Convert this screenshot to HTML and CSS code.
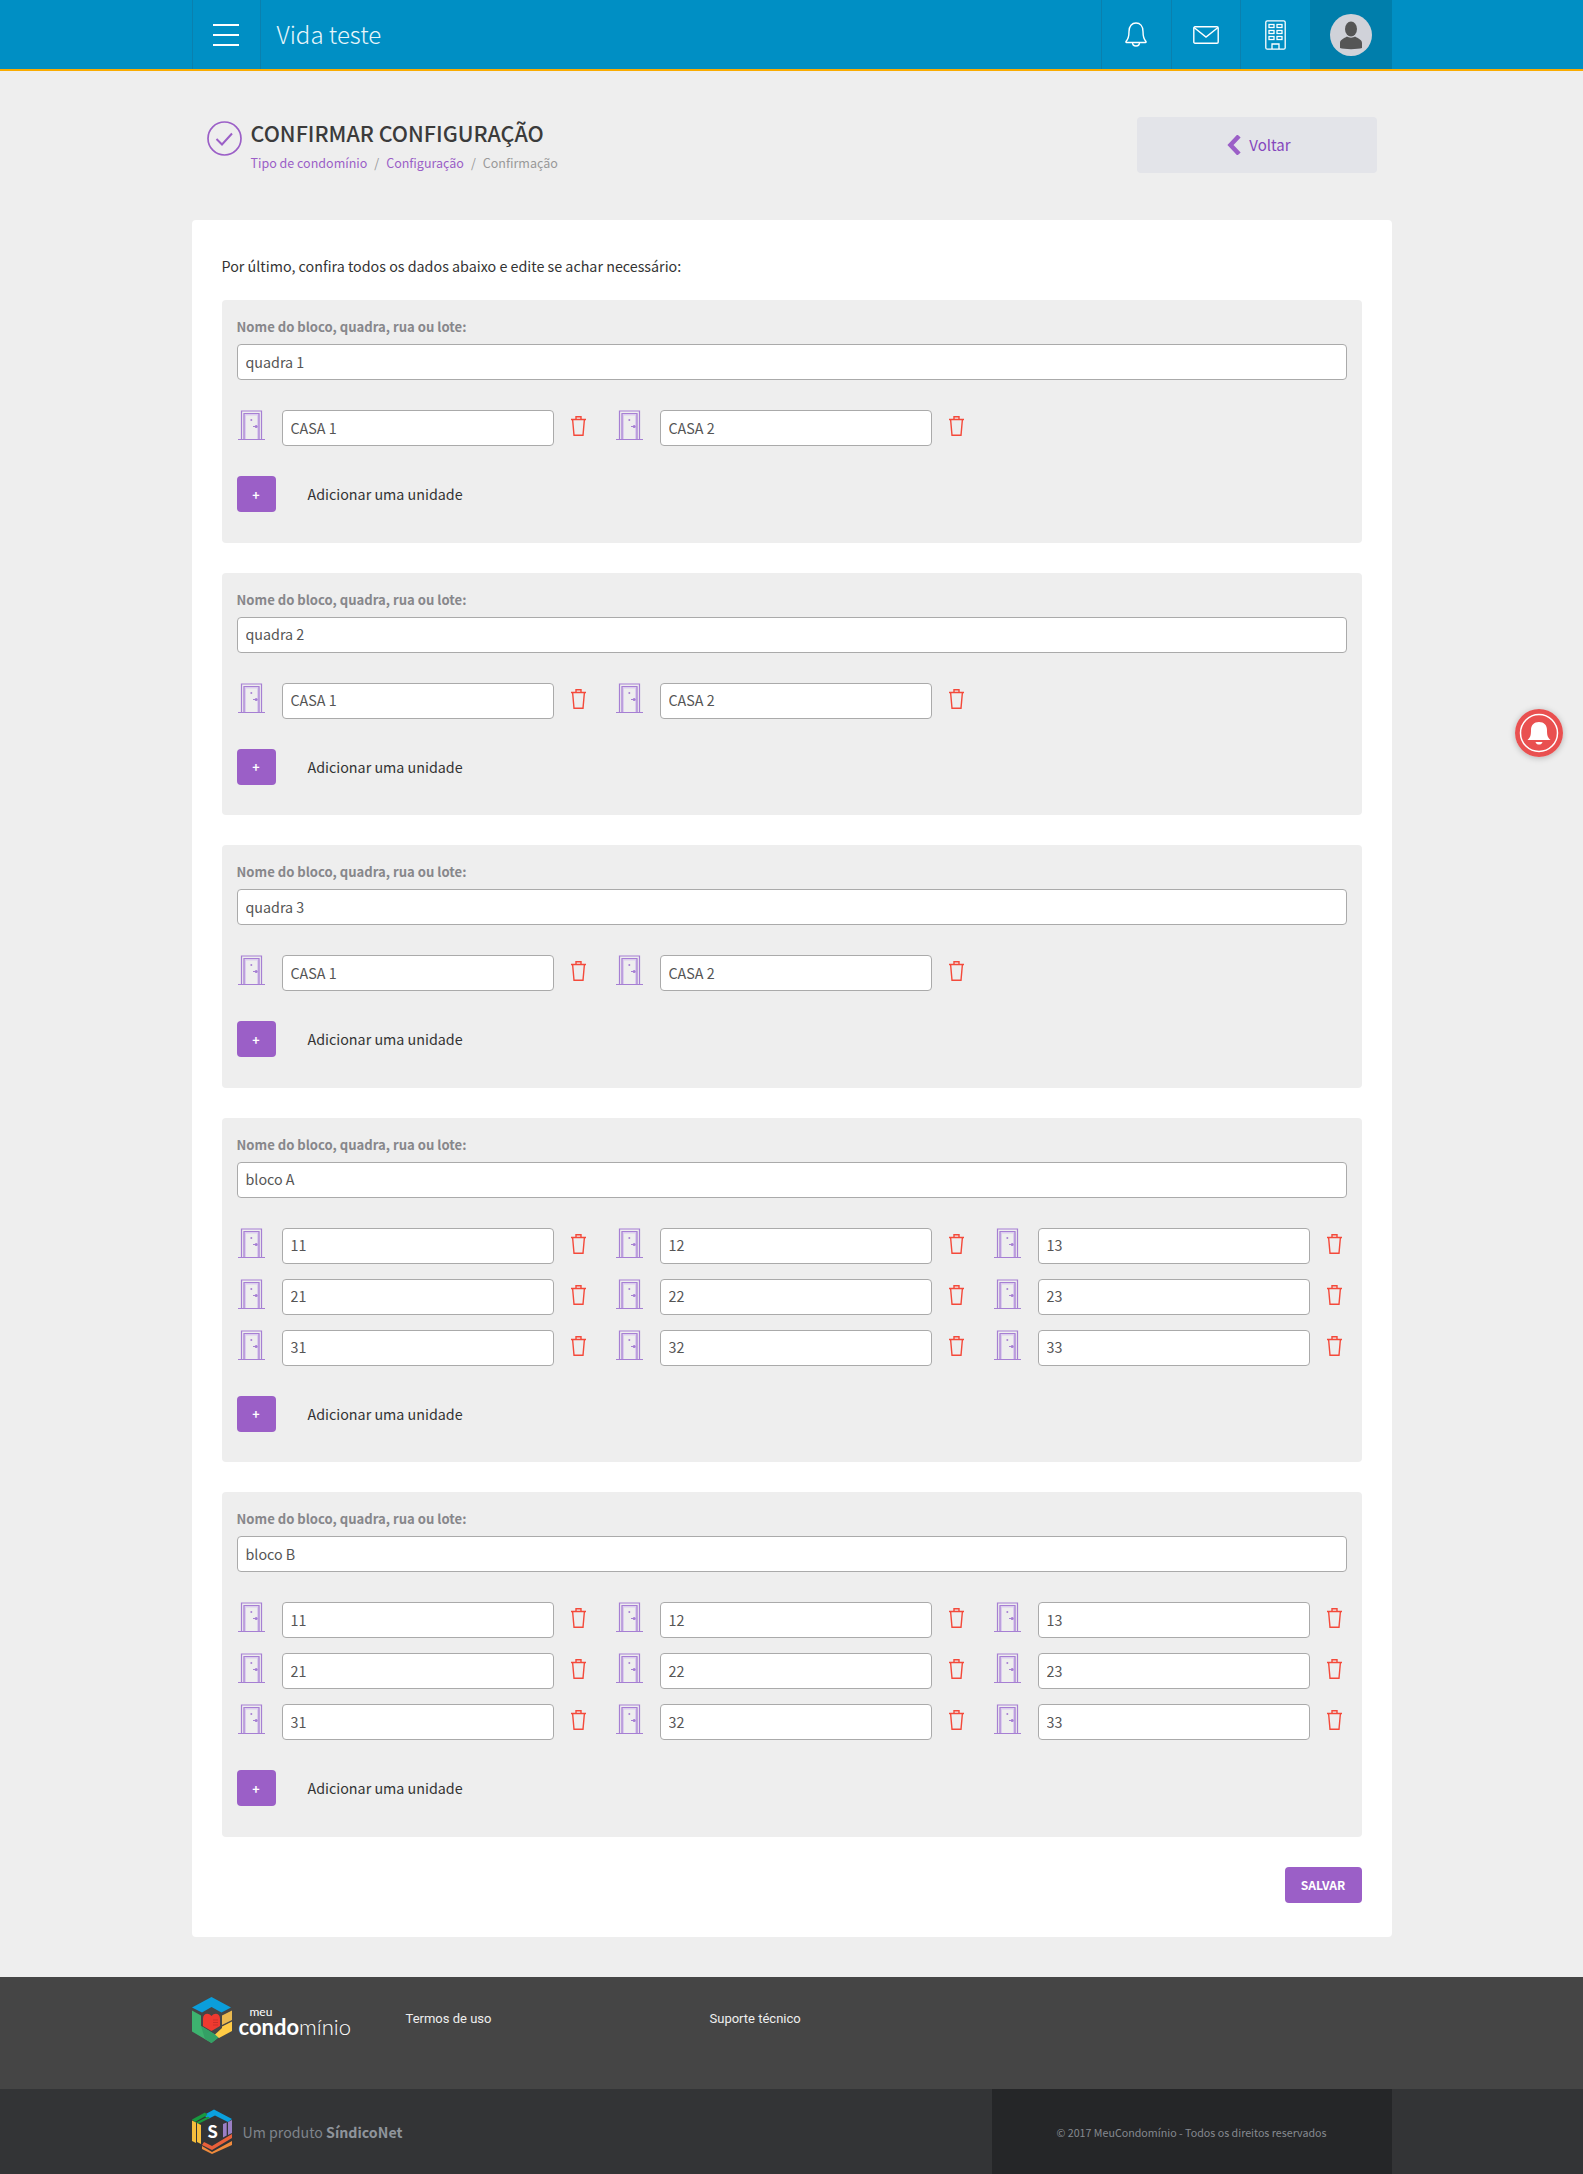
FILE: index.html
```html
<!DOCTYPE html>
<html lang="pt-BR">
<head>
    <meta charset="UTF-8">
    <meta name="viewport" content="width=device-width, initial-scale=1.0">
    <title>Confirmar configuração</title>
    <link rel="stylesheet" href="styles.css">
</head>
<body>
    <svg class="defs" width="0" height="0">
        <symbol id="door" viewBox="0 0 27 30">
            <path d="M5.500 29V3.500H21.500V29Z" fill="#dccdee"/>
            <path d="M8 29V5.500H19V29Z" fill="#eee"/>
            <path d="M0 29.500H27M3.500 29V1H23.500V29M6 29V3.500H21V29" fill="none" stroke="#a67fd3" stroke-width="1.200"/>
            <circle cx="13.300" cy="10" r="1" fill="#a67fd3"/>
            <circle cx="18.200" cy="16.500" r="1.500" fill="#a67fd3"/>
            <path d="M15 16.500H18" stroke="#a67fd3"/>
        </symbol>
        <symbol id="trash" viewBox="0 0 15 20">
            <path d="M0 3.500H15M5 3.500V.7H10V3.500M1.600 3.500L3 19.300H12L13.400 3.500" fill="none" stroke="#f4493a" stroke-width="1.400"/>
        </symbol>
    </svg>

    <header class="topbar">
        <div class="container topbar-inner">
            <button class="menu-btn" aria-label="Menu"><span></span><span></span><span></span></button>
            <div class="site-name">Vida teste</div>
            <nav class="top-icons">
                <a class="top-icon">
                    <svg width="22" height="25" viewBox="0 0 22 25" fill="none" stroke="#fff" stroke-width="1.400">
                        <path d="M1 19.500C3.500 17 4 15 4 9.500C4 4 7 1 11 1C15 1 18 4 18 9.500C18 15 18.500 17 21 19.500C21.300 20 21 20.500 20.500 20.500H1.500C1 20.500 .7 20 1 19.500Z"/>
                        <path d="M7.500 20.500C7.500 23 9 24 11 24C13 24 14.500 23 14.500 20.500"/>
                    </svg>
                </a>
                <a class="top-icon">
                    <svg width="26" height="18" viewBox="0 0 26 18" fill="none" stroke="#fff" stroke-width="1.400">
                        <rect x=".8" y=".8" width="24.400" height="16.400" rx="1.200"/>
                        <path d="M1 1.500L13 11L25 1.500"/>
                    </svg>
                </a>
                <a class="top-icon">
                    <svg width="21" height="30" viewBox="0 0 21 30" fill="none" stroke="#fff" stroke-width="1.300">
                        <rect x=".8" y=".8" width="19.400" height="28.400" rx="1.500"/>
                        <rect x="4" y="4.500" width="5" height="3"/><rect x="12" y="4.500" width="5" height="3"/>
                        <rect x="4" y="10.500" width="5" height="3"/><rect x="12" y="10.500" width="5" height="3"/>
                        <rect x="4" y="16.500" width="5" height="3"/><rect x="12" y="16.500" width="5" height="3"/>
                        <path d="M7 29V24H14V29"/>
                    </svg>
                </a>
                <a class="top-user">
                    <svg width="42" height="42" viewBox="0 0 42 42">
                        <circle cx="21" cy="21" r="21" fill="#d0d2d9"/>
                        <ellipse cx="21" cy="15" rx="6" ry="7.400" fill="#555"/>
                        <path d="M10 34V29C10 25.500 14 24.500 17 22.500C19 24 23 24 25 22.500C28 24.500 32 25.500 32 29V34C28 35.500 14 35.500 10 34Z" fill="#555"/>
                    </svg>
                </a>
            </nav>
        </div>
    </header>

    <main class="container">
        <div class="page-head">
            <div class="page-title">
                <svg class="title-check" width="35" height="35" viewBox="0 0 35 35" fill="none" stroke="#9b5fc7">
                    <circle cx="17.500" cy="17.500" r="16.500" stroke-width="1.700"/>
                    <path d="M9.500 18L15 23.500L25 12.500" stroke-width="2"/>
                </svg>
                <div>
                    <h1>CONFIRMAR CONFIGURAÇÃO</h1>
                    <div class="breadcrumb">
                        <a>Tipo de condomínio</a><span class="sep">/</span><a>Configuração</a><span class="sep">/</span><span class="current">Confirmação</span>
                    </div>
                </div>
            </div>
            <a class="back-btn">
                <svg width="14" height="20" viewBox="0 0 14 20"><path d="M12 1L3.500 10L12 19" fill="none" stroke="#9b5fc7" stroke-width="4.500"/></svg>
                Voltar
            </a>
        </div>

        <section class="card">
            <p class="intro">Por último, confira todos os dados abaixo e edite se achar necessário:</p>

            <div class="block">
                <label class="block-label">Nome do bloco, quadra, rua ou lote:</label>
                <input class="field" type="text" value="quadra 1">
                <div class="units">
                    <div class="unit"><svg class="door"><use href="#door"/></svg><input class="field" type="text" value="CASA 1"><svg class="trash"><use href="#trash"/></svg></div>
                    <div class="unit"><svg class="door"><use href="#door"/></svg><input class="field" type="text" value="CASA 2"><svg class="trash"><use href="#trash"/></svg></div>
                </div>
                <div class="add-row"><button class="btn-add">+</button><span>Adicionar uma unidade</span></div>
            </div>

            <div class="block">
                <label class="block-label">Nome do bloco, quadra, rua ou lote:</label>
                <input class="field" type="text" value="quadra 2">
                <div class="units">
                    <div class="unit"><svg class="door"><use href="#door"/></svg><input class="field" type="text" value="CASA 1"><svg class="trash"><use href="#trash"/></svg></div>
                    <div class="unit"><svg class="door"><use href="#door"/></svg><input class="field" type="text" value="CASA 2"><svg class="trash"><use href="#trash"/></svg></div>
                </div>
                <div class="add-row"><button class="btn-add">+</button><span>Adicionar uma unidade</span></div>
            </div>

            <div class="block">
                <label class="block-label">Nome do bloco, quadra, rua ou lote:</label>
                <input class="field" type="text" value="quadra 3">
                <div class="units">
                    <div class="unit"><svg class="door"><use href="#door"/></svg><input class="field" type="text" value="CASA 1"><svg class="trash"><use href="#trash"/></svg></div>
                    <div class="unit"><svg class="door"><use href="#door"/></svg><input class="field" type="text" value="CASA 2"><svg class="trash"><use href="#trash"/></svg></div>
                </div>
                <div class="add-row"><button class="btn-add">+</button><span>Adicionar uma unidade</span></div>
            </div>

            <div class="block">
                <label class="block-label">Nome do bloco, quadra, rua ou lote:</label>
                <input class="field" type="text" value="bloco A">
                <div class="units">
                    <div class="unit"><svg class="door"><use href="#door"/></svg><input class="field" type="text" value="11"><svg class="trash"><use href="#trash"/></svg></div>
                    <div class="unit"><svg class="door"><use href="#door"/></svg><input class="field" type="text" value="12"><svg class="trash"><use href="#trash"/></svg></div>
                    <div class="unit"><svg class="door"><use href="#door"/></svg><input class="field" type="text" value="13"><svg class="trash"><use href="#trash"/></svg></div>
                    <div class="unit"><svg class="door"><use href="#door"/></svg><input class="field" type="text" value="21"><svg class="trash"><use href="#trash"/></svg></div>
                    <div class="unit"><svg class="door"><use href="#door"/></svg><input class="field" type="text" value="22"><svg class="trash"><use href="#trash"/></svg></div>
                    <div class="unit"><svg class="door"><use href="#door"/></svg><input class="field" type="text" value="23"><svg class="trash"><use href="#trash"/></svg></div>
                    <div class="unit"><svg class="door"><use href="#door"/></svg><input class="field" type="text" value="31"><svg class="trash"><use href="#trash"/></svg></div>
                    <div class="unit"><svg class="door"><use href="#door"/></svg><input class="field" type="text" value="32"><svg class="trash"><use href="#trash"/></svg></div>
                    <div class="unit"><svg class="door"><use href="#door"/></svg><input class="field" type="text" value="33"><svg class="trash"><use href="#trash"/></svg></div>
                </div>
                <div class="add-row"><button class="btn-add">+</button><span>Adicionar uma unidade</span></div>
            </div>

            <div class="block">
                <label class="block-label">Nome do bloco, quadra, rua ou lote:</label>
                <input class="field" type="text" value="bloco B">
                <div class="units">
                    <div class="unit"><svg class="door"><use href="#door"/></svg><input class="field" type="text" value="11"><svg class="trash"><use href="#trash"/></svg></div>
                    <div class="unit"><svg class="door"><use href="#door"/></svg><input class="field" type="text" value="12"><svg class="trash"><use href="#trash"/></svg></div>
                    <div class="unit"><svg class="door"><use href="#door"/></svg><input class="field" type="text" value="13"><svg class="trash"><use href="#trash"/></svg></div>
                    <div class="unit"><svg class="door"><use href="#door"/></svg><input class="field" type="text" value="21"><svg class="trash"><use href="#trash"/></svg></div>
                    <div class="unit"><svg class="door"><use href="#door"/></svg><input class="field" type="text" value="22"><svg class="trash"><use href="#trash"/></svg></div>
                    <div class="unit"><svg class="door"><use href="#door"/></svg><input class="field" type="text" value="23"><svg class="trash"><use href="#trash"/></svg></div>
                    <div class="unit"><svg class="door"><use href="#door"/></svg><input class="field" type="text" value="31"><svg class="trash"><use href="#trash"/></svg></div>
                    <div class="unit"><svg class="door"><use href="#door"/></svg><input class="field" type="text" value="32"><svg class="trash"><use href="#trash"/></svg></div>
                    <div class="unit"><svg class="door"><use href="#door"/></svg><input class="field" type="text" value="33"><svg class="trash"><use href="#trash"/></svg></div>
                </div>
                <div class="add-row"><button class="btn-add">+</button><span>Adicionar uma unidade</span></div>
            </div>

            <div class="card-actions"><button class="btn-save">SALVAR</button></div>
        </section>
    </main>

    <footer>
        <div class="footer-top">
            <div class="container footer-top-inner">
                <div class="brand">
                    <svg width="40" height="46" viewBox="0 0 40 46">
                        <path d="M19.500 0L39 10.500L29.500 15.500L19.500 10L10 15.500L0 10.500Z" fill="#0b9edb"/>
                        <path d="M0 13.500L9 18.500V29L19 35L27 40L19.500 46L0 34.500Z" fill="#3db26f"/>
                        <path d="M9 29L19 35L27 40L19.500 46L13 42L9 29Z" fill="#34a065"/>
                        <path d="M30 18.500L40 13.500V23L30 28Z" fill="#e9b84f"/>
                        <path d="M40 24.500V34L27 41L23 37.500L30 31V29.500Z" fill="#ffcb45"/>
                        <path d="M19.500 19C16 15 11 17 11 21.500V29L19.500 34L28 29V21.500C28 17 23 15 19.500 19Z" fill="#ee3a30"/>
                        <path d="M21 23H26M21 25.500H26M21 28H26" stroke="#c9302a" stroke-width="1.200"/>
                    </svg>
                    <div class="wordmark"><span class="wm-small">meu</span><span class="wm-big"><b>condo</b>mínio</span></div>
                </div>
                <a class="foot-link first">Termos de uso</a>
                <a class="foot-link">Suporte técnico</a>
            </div>
        </div>
        <div class="footer-bottom">
            <div class="container footer-bottom-inner">
                <div class="product">
                    <svg width="40" height="45" viewBox="0 0 40 45">
                        <path d="M12 6L22 .5L40 10L36 13L23 6.500L16 10Z" fill="#0ba0de"/>
                        <path d="M0 10.500L13 3.500L15.500 6L3 13Z" fill="#179a3f"/>
                        <path d="M4 13.500L16 7.500L18 9L6 15Z" fill="#179a3f"/>
                        <path d="M0 11.500L4 13.500V34L0 32Z" fill="#f5bd3c"/>
                        <path d="M5 14L9 16V35L5 33Z" fill="#f5bd3c"/>
                        <path d="M31 15L34.700 13.500V26.500L31 28.500Z" fill="#9a7fc4"/>
                        <path d="M36 13L40 11V24L36 26Z" fill="#9a7fc4"/>
                        <path d="M10 36L20 41L40 29V25L20 37L12 33Z" fill="#e9603a"/>
                        <path d="M10 37L20 43L40 32V36L20 45L10 40Z" fill="#f08a3c"/>
                        <text x="20.500" y="29" text-anchor="middle" class="s-mark">S</text>
                    </svg>
                    <span class="product-name">Um produto <b>SíndicoNet</b></span>
                </div>
                <div class="copyright">© 2017 MeuCondomínio - Todos os direitos reservados</div>
            </div>
        </div>
    </footer>

    <a class="float-bell">
        <svg width="48" height="48" viewBox="0 0 48 48">
            <circle cx="24" cy="24" r="24" fill="#e95050"/>
            <circle cx="24" cy="24" r="18.500" fill="none" stroke="#fff" stroke-width="1.500"/>
            <path d="M12.500 31C15.500 28.500 16 26 16 21C16 16 19 13 24 13C29 13 32 16 32 21C32 26 32.500 28.500 35.500 31Z" fill="#fff"/>
            <path d="M20.500 33H27.500C27 35 25.500 35.500 24 35.500C22.500 35.500 21 35 20.500 33Z" fill="#fff"/>
        </svg>
    </a>
</body>
</html>
```

FILE: styles.css
```css
* {
    box-sizing: border-box;
}
body {
    margin: 0;
    background-color: #eee;
    color: #333;
    font-family: "Noto Sans CJK SC", "Open Sans", sans-serif;
    font-size: 14.300px;
    line-height: 20px;
}
a {
    text-decoration: none;
}
.defs {
    display: block;
    height: 0;
}
.container {
    width: 1200px;
    margin: 0 auto;
}

/* barra do topo */
.topbar {
    height: 71px;
    background-color: #008fc4;
    border-bottom: 2px solid #f9ab00;
}
.topbar-inner {
    display: flex;
    height: 69px;
}
.menu-btn {
    display: flex;
    flex-direction: column;
    justify-content: center;
    gap: 8px;
    width: 69px;
    padding: 0 20px;
    background: none;
    border: 0;
    border-left: 1px solid #0a80ae;
    border-right: 1px solid #0a80ae;
}
.menu-btn span {
    display: block;
    width: 26px;
    height: 2px;
    background-color: #fff;
}
.site-name {
    margin-left: 16px;
    color: #e8f6fb;
    font-size: 24px;
    font-weight: 300;
    line-height: 67px;
}
.top-icons {
    display: flex;
    margin-left: auto;
}
.top-icon {
    display: flex;
    align-items: center;
    justify-content: center;
    width: 69.500px;
    border-left: 1px solid #0a80ae;
}
.top-user {
    display: flex;
    align-items: center;
    justify-content: center;
    width: 82px;
    background-color: #007eab;
}

/* titulo */
.page-head {
    display: flex;
    justify-content: space-between;
    height: 149px;
    padding: 46px 15px 0;
}
.page-title {
    display: flex;
    gap: 9px;
}
.title-check {
    margin-top: 4px;
}
h1 {
    margin: 0;
    color: #3b3b3b;
    font-size: 21.500px;
    font-weight: 500;
    line-height: 32px;
}
.breadcrumb {
    margin-top: 5px;
    font-size: 12.500px;
    line-height: 18px;
}
.breadcrumb a {
    color: #9b5fc7;
}
.breadcrumb .sep {
    margin: 0 7px;
    color: #999;
}
.breadcrumb .current {
    color: #999;
}
.back-btn {
    display: flex;
    align-items: center;
    justify-content: center;
    gap: 8px;
    width: 240px;
    height: 56px;
    padding-left: 5px;
    background-color: #e3e4e9;
    border-radius: 4px;
    color: #8547bd;
    font-size: 15px;
}

/* cartao principal */
.card {
    padding: 36px 30px 34px;
    background-color: #fff;
    border-radius: 4px;
}
.intro {
    margin: 0 0 24px;
    color: #333;
    font-size: 14.300px;
    line-height: 20px;
}
.block {
    margin-bottom: 30px;
    padding: 15px 15px 30.600px;
    background-color: #eee;
    border-radius: 4px;
}
.block-label {
    display: block;
    height: 29px;
    color: #87878b;
    font-size: 13.100px;
    font-weight: 700;
    line-height: 24px;
}
.field {
    display: block;
    width: 100%;
    height: 36px;
    padding: 0 8px 2px;
    background-color: #fff;
    border: 1px solid #aaa;
    border-radius: 4px;
    color: #555;
    font-family: inherit;
    font-size: 14.300px;
}
.units {
    display: grid;
    grid-template-columns: repeat(3, 378px);
    row-gap: 15px;
    margin-top: 30px;
}
.unit {
    display: flex;
    align-items: flex-start;
}
.door {
    flex: none;
    width: 27px;
    height: 30px;
    margin: 0 17px 0 1px;
}
.unit .field {
    flex: none;
    width: 272px;
    color: #555;
}
.trash {
    flex: none;
    width: 15px;
    height: 20px;
    margin: 6px 0 0 17px;
}
.add-row {
    display: flex;
    align-items: center;
    gap: 32px;
    margin-top: 30px;
    color: #333;
    font-size: 14.300px;
}
.btn-add {
    width: 39px;
    height: 36px;
    padding: 0;
    background-color: #9b5fc7;
    border: 0;
    border-radius: 4px;
    color: #fff;
    font-family: inherit;
    font-size: 12.500px;
    font-weight: 700;
}
.card-actions {
    display: flex;
    justify-content: flex-end;
}
.btn-save {
    width: 77px;
    height: 36px;
    padding: 0;
    background-color: #9b5fc7;
    border: 0;
    border-radius: 4px;
    color: #fff;
    font-family: inherit;
    font-size: 12.100px;
    font-weight: 700;
}

/* rodape */
footer {
    margin-top: 40px;
}
.footer-top {
    height: 112px;
    background-color: #454545;
}
.footer-top-inner {
    display: flex;
    padding-top: 20px;
}
.brand {
    display: flex;
    gap: 7px;
    width: 214px;
}
.wordmark {
    display: flex;
    flex-direction: column;
    padding-top: 10px;
    color: #fff;
    font-family: Lato, sans-serif;
}
.wm-small {
    margin-left: 11px;
    font-size: 12px;
    line-height: 9px;
}
.wm-big {
    font-size: 22px;
    font-weight: 300;
    line-height: 22px;
}
.wm-big b {
    font-weight: 700;
}
.foot-link {
    width: 304px;
    margin-top: 12px;
    color: #eee;
    font-family: Roboto, sans-serif;
    font-size: 13px;
    line-height: 20px;
}
.footer-bottom {
    height: 85px;
    background-color: #333436;
}
.footer-bottom-inner {
    display: flex;
    justify-content: space-between;
    height: 85px;
}
.product {
    display: flex;
    align-items: center;
    gap: 11px;
    color: #7f848b;
    font-size: 14.200px;
}
.product-name {
    padding-top: 2px;
}
.product b {
    color: #8f949b;
}
.s-mark {
    fill: #fff;
    font-family: "Noto Sans CJK SC", sans-serif;
    font-size: 17px;
    font-weight: 700;
}
.copyright {
    width: 400px;
    height: 85px;
    background-color: #252628;
    color: #858a90;
    font-size: 10.700px;
    line-height: 87px;
    text-align: center;
}
.float-bell {
    position: fixed;
    top: 709px;
    right: 20px;
    width: 48px;
    height: 48px;
    border-radius: 50%;
    box-shadow: 0 1px 6px rgba(0, 0, 0, 0.25);
}
```
